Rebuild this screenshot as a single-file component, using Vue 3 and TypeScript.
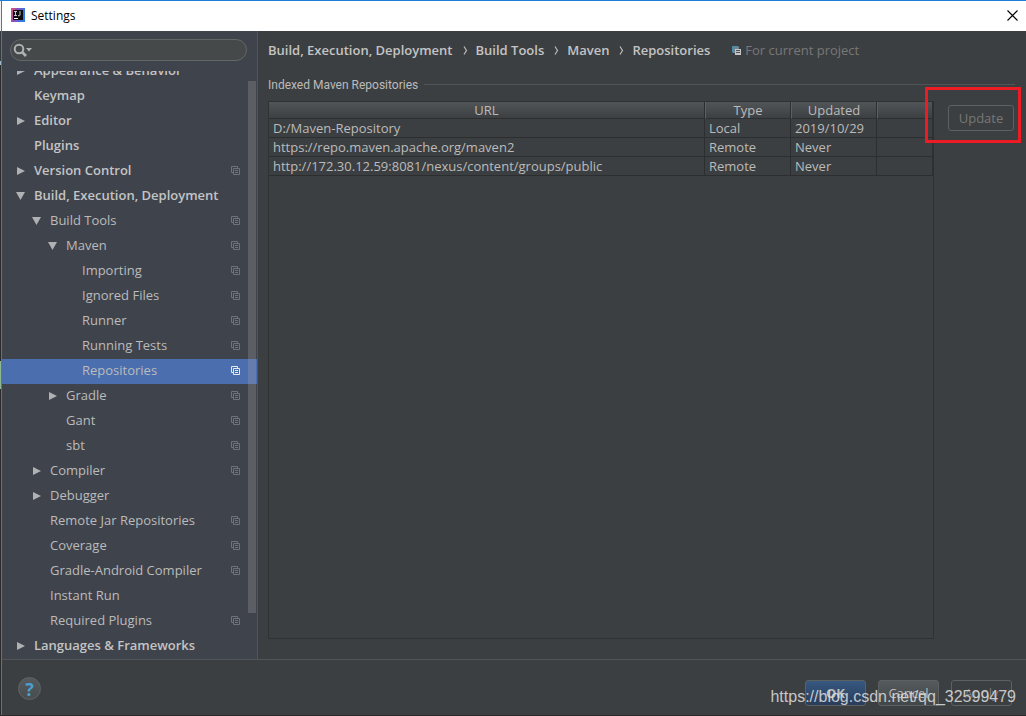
<script setup lang="ts">
import { ref } from 'vue'

interface TreeItem {
  label: string
  level: number
  arrow?: 'right' | 'down'
  project?: boolean
}

interface Repository {
  url: string
  type: string
  updated: string
}

const items: TreeItem[] = [
  { label: 'Appearance & Behavior', level: 0, arrow: 'right' },
  { label: 'Keymap', level: 0 },
  { label: 'Editor', level: 0, arrow: 'right' },
  { label: 'Plugins', level: 0 },
  { label: 'Version Control', level: 0, arrow: 'right', project: true },
  { label: 'Build, Execution, Deployment', level: 0, arrow: 'down' },
  { label: 'Build Tools', level: 1, arrow: 'down', project: true },
  { label: 'Maven', level: 2, arrow: 'down', project: true },
  { label: 'Importing', level: 3, project: true },
  { label: 'Ignored Files', level: 3, project: true },
  { label: 'Runner', level: 3, project: true },
  { label: 'Running Tests', level: 3, project: true },
  { label: 'Repositories', level: 3, project: true },
  { label: 'Gradle', level: 2, arrow: 'right', project: true },
  { label: 'Gant', level: 2, project: true },
  { label: 'sbt', level: 2, project: true },
  { label: 'Compiler', level: 1, arrow: 'right', project: true },
  { label: 'Debugger', level: 1, arrow: 'right' },
  { label: 'Remote Jar Repositories', level: 1, project: true },
  { label: 'Coverage', level: 1, project: true },
  { label: 'Gradle-Android Compiler', level: 1, project: true },
  { label: 'Instant Run', level: 1 },
  { label: 'Required Plugins', level: 1, project: true },
  { label: 'Languages & Frameworks', level: 0, arrow: 'right' },
]

const repositories: Repository[] = [
  { url: 'D:/Maven-Repository', type: 'Local', updated: '2019/10/29' },
  { url: 'https://repo.maven.apache.org/maven2', type: 'Remote', updated: 'Never' },
  { url: 'http://172.30.12.59:8081/nexus/content/groups/public', type: 'Remote', updated: 'Never' },
]

const crumbs: string[] = ['Build, Execution, Deployment', 'Build Tools', 'Maven', 'Repositories']
const selected = ref('Repositories')
const query = ref('')
</script>

<template>
  <div class="window">
    <header class="titlebar">
      <svg class="app-icon" width="14" height="14" viewBox="0 0 14 14" aria-hidden="true">
        <defs>
          <linearGradient id="logo" x1="0" y1="0" x2="1" y2="0.3">
            <stop offset="0" stop-color="#f0506e" />
            <stop offset="0.45" stop-color="#8a4fc0" />
            <stop offset="1" stop-color="#2b7be8" />
          </linearGradient>
        </defs>
        <rect width="14" height="14" fill="url(#logo)" />
        <rect x="2" y="2" width="10" height="10" fill="#0c0c10" />
        <path d="M3 3.500h3M4.500 3.500v4M3 7.500h3M9 3v4q0 .7-.8.7H7" fill="none" stroke="#c8c8c8" stroke-width="1" />
        <path d="M3 10.500h4" stroke="#fff" stroke-width="1" />
      </svg>
      <h1 class="title">Settings</h1>
      <button class="close" type="button" aria-label="Close">
        <svg width="11" height="11" viewBox="0 0 11 11" aria-hidden="true">
          <path d="M.5.5l10 10M10.500.5l-10 10" stroke="#000" stroke-width="1.100" />
        </svg>
      </button>
    </header>

    <div class="body">
      <aside class="sidebar">
        <label class="search">
          <svg width="20" height="15" viewBox="0 0 20 15" aria-hidden="true">
            <circle cx="6" cy="6" r="4.300" fill="none" stroke="#afb1b3" stroke-width="2" />
            <path d="M9 9l4 4" stroke="#afb1b3" stroke-width="2.600" />
            <path d="M13 5h6l-3 3.500z" fill="#afb1b3" />
          </svg>
          <input v-model="query" type="text" aria-label="Search settings" />
        </label>
        <nav class="tree-area" aria-label="Settings categories">
          <ul class="tree">
            <li v-for="item in items" :key="item.label">
              <button
                type="button"
                class="row"
                :class="['level-' + item.level, { selected: item.label === selected }]"
                @click="selected = item.label"
              >
                <svg class="arrow" width="10" height="10" viewBox="0 0 10 10" aria-hidden="true">
                  <path v-if="item.arrow === 'right'" d="M1 1l8 4-8 4z" fill="#afb1b3" />
                  <path v-if="item.arrow === 'down'" d="M0 1h9L4.500 9z" fill="#afb1b3" />
                </svg>
                <span class="label">{{ item.label }}</span>
                <svg v-if="item.project" class="copy" width="9" height="9" viewBox="0 0 9 9" aria-hidden="true">
                  <path d="M2 6.500H.5v-6h6V2M2.500 2.500h6v6h-6zM4 4.500h3M4 6.500h3" fill="none" stroke="currentColor" />
                </svg>
              </button>
            </li>
          </ul>
          <div class="scroll-thumb"></div>
        </nav>
      </aside>

      <main class="content">
        <div class="crumbs">
          <template v-for="(crumb, i) in crumbs" :key="crumb">
            <svg v-if="i > 0" class="chevron" width="5" height="9" viewBox="0 0 5 9" aria-hidden="true">
              <path d="M1 .5l2.500 4L1 8.500" fill="none" stroke="#bbb" stroke-width="1.200" />
            </svg>
            <span class="crumb">{{ crumb }}</span>
          </template>
          <span class="scope">
            <svg width="9" height="9" viewBox="0 0 9 9" aria-hidden="true">
              <path d="M.5 6.500v-6h6" fill="none" stroke="#4a8fb0" />
              <path d="M1 1h6v6H1z" fill="#6d8591" />
              <path d="M3 3h6v6H3z" fill="#c3c5c6" />
              <path d="M4 4.500h4M4 6.500h4" stroke="#4c5052" />
            </svg>
            For current project
          </span>
        </div>

        <section class="group">
          <h2 class="group-title">Indexed Maven Repositories</h2>
          <div class="group-body">
            <div class="table-pane">
              <table>
                <colgroup>
                  <col />
                  <col class="col-mid" />
                  <col class="col-mid" />
                  <col class="col-last" />
                </colgroup>
                <thead>
                  <tr>
                    <th scope="col">URL</th>
                    <th scope="col">Type</th>
                    <th scope="col">Updated</th>
                    <th scope="col"></th>
                  </tr>
                </thead>
                <tbody>
                  <tr v-for="repo in repositories" :key="repo.url">
                    <td>{{ repo.url }}</td>
                    <td>{{ repo.type }}</td>
                    <td>{{ repo.updated }}</td>
                    <td></td>
                  </tr>
                </tbody>
              </table>
            </div>
            <div class="actions">
              <button class="btn disabled" type="button" disabled>Update</button>
              <div class="highlight"></div>
            </div>
          </div>
        </section>
      </main>
    </div>

    <footer class="footer">
      <button class="help" type="button" aria-label="Help">?</button>
      <div class="buttons">
        <button class="btn primary" type="button">OK</button>
        <button class="btn plain" type="button">Cancel</button>
        <button class="btn disabled" type="button" disabled>Apply</button>
      </div>
      <span class="watermark">https://blog.csdn.net/qq_32599479</span>
    </footer>
  </div>
</template>

<style>
body {
  margin: 0;
  background: #3c3f41;
}
</style>

<style scoped>
* {
  box-sizing: border-box;
}

.window {
  display: flex;
  flex-direction: column;
  height: 100vh;
  border-top: 1px solid #1c7fd4;
  border-bottom: 1px solid #2b2b2b;
  padding-left: 2px;
  background:
    linear-gradient(#2a81c4, #2a81c4) 1px 0 / 1px 100% no-repeat,
    linear-gradient(#f2f2f2 0 30px, #33383c 30px 60px, #9bb8cc 60px 64px, #2b2b2b 64px 360px, #8fb98f 360px 388px, #2b2b2b 388px) 0 0 / 1px 100% no-repeat,
    #3c3f41;
  color: #bbb;
  font-family: "Open Sans", "Noto Sans", sans-serif;
  font-size: 13px;
}

button {
  font: inherit;
  color: inherit;
  margin: 0;
}

.titlebar {
  display: flex;
  align-items: center;
  height: 30px;
  padding: 0 8px 2px 9px;
  background: #fff;
  color: #000;
}

.title {
  flex: 1;
  margin: 0 0 0 6px;
  font-size: 12px;
  font-weight: 400;
}

.close {
  display: flex;
  padding: 0;
  border: 0;
  background: none;
}

.body {
  flex: 1;
  display: flex;
  min-height: 0;
}

.sidebar {
  display: flex;
  flex-direction: column;
  width: 256px;
  border-right: 1px solid #515456;
  background: #3f434c;
}

.search {
  display: flex;
  flex: none;
  align-items: center;
  height: 22px;
  margin: 8px 10px 10px 8px;
  padding: 0 8px 0 2px;
  border: 1px solid #646767;
  border-radius: 11px;
  background: #45494a;
}

.search input {
  flex: 1;
  min-width: 0;
  padding: 0;
  border: 0;
  outline: 0;
  background: none;
  color: #bbb;
  font: inherit;
}

.tree-area {
  position: relative;
  flex: 1;
  display: flex;
  flex-direction: column;
  justify-content: flex-end;
  min-height: 0;
  overflow: hidden;
}

.tree {
  margin: 0;
  padding: 0;
  list-style: none;
}

.row {
  display: flex;
  align-items: center;
  width: 100%;
  height: 25px;
  padding: 0 17px 2px 14px;
  border: 0;
  background: none;
  text-align: left;
}

.level-0 {
  color: #c4c4c4;
  font-weight: 600;
}

.level-1 {
  padding-left: 30px;
}

.level-2 {
  padding-left: 46px;
}

.level-3 {
  padding-left: 62px;
}

.row.selected {
  background: #4b6eaf;
}

.arrow {
  flex: none;
}

.label {
  flex: 1;
  margin-left: 8px;
  padding-bottom: 2px;
  white-space: nowrap;
}

.copy {
  color: #6f7377;
}

.selected .copy {
  color: #e4e8ee;
}

.scroll-thumb {
  position: absolute;
  top: 10px;
  bottom: 46px;
  right: 1px;
  width: 8px;
  background: rgba(166, 166, 166, 0.28);
}

.content {
  flex: 1;
  display: flex;
  flex-direction: column;
  min-width: 0;
  padding: 9px 11px 20px 10px;
}

.crumbs {
  display: flex;
  align-items: center;
  height: 20px;
  white-space: nowrap;
}

.crumb {
  color: #c4c4c4;
  font-weight: 600;
}

.chevron {
  margin: 0 8px 0 10px;
}

.scope {
  display: flex;
  align-items: center;
  gap: 4px;
  margin-left: 22px;
  color: #777;
}

.group {
  flex: 1;
  display: flex;
  flex-direction: column;
  margin-top: 15px;
}

.group-title {
  display: flex;
  align-items: center;
  gap: 6px;
  height: 20px;
  margin: 0;
  font-family: Roboto, "Noto Sans", sans-serif;
  font-size: 12px;
  font-weight: 400;
}

.group-title::after {
  content: "";
  flex: 1;
  height: 1px;
  margin-bottom: 2px;
  background: #515456;
}

.group-body {
  flex: 1;
  display: flex;
  gap: 14px;
  margin-top: 6px;
}

.table-pane {
  flex: 1;
  border: 1px solid #2f3133;
}

table {
  width: 100%;
  border-collapse: separate;
  border-spacing: 0;
  table-layout: fixed;
}

.col-mid {
  width: 86px;
}

.col-last {
  width: 56px;
}

th,
td {
  padding: 0 4px;
  border-right: 1px solid #2c2e30;
  border-bottom: 1px solid #2c2e30;
  line-height: 18px;
  white-space: nowrap;
}

th {
  height: 17px;
  padding: 0;
  background: linear-gradient(#515557, #3d4042);
  font-weight: 400;
  line-height: 16px;
}

td {
  height: 19px;
}

th + th {
  border-left: 1px solid #5c6062;
}

.actions {
  position: relative;
  padding: 4px 1px 0 0;
}

.btn {
  display: block;
  width: 61px;
  height: 26px;
  padding: 0;
  border: 1px solid #5e6162;
  border-radius: 3px;
  background: none;
}

.actions .btn {
  width: 66px;
}

.btn.disabled {
  color: #777;
}

.btn.primary {
  background: linear-gradient(#365880, #293c59);
  font-weight: 700;
}

.btn.plain {
  background: linear-gradient(#555a5c, #414648);
}

.highlight {
  position: absolute;
  top: -14px;
  left: -23px;
  right: -6px;
  height: 56px;
  border: 3px solid #ed1c24;
  pointer-events: none;
}

.footer {
  position: relative;
  display: flex;
  flex: none;
  align-items: center;
  justify-content: space-between;
  height: 56px;
  padding: 0 14px 0 16px;
  border-top: 1px solid #515456;
}

.help {
  width: 23px;
  height: 23px;
  margin-top: 2px;
  padding: 0;
  border: 1px solid #606466;
  border-radius: 50%;
  background: linear-gradient(#55595b, #484d4f);
  color: #4a9fcf;
  font-size: 18px;
  font-weight: 700;
  line-height: 20px;
}

.buttons {
  display: flex;
  gap: 12px;
  padding-top: 10px;
}

.watermark {
  position: absolute;
  right: 10px;
  bottom: 8px;
  color: rgba(225, 225, 225, 0.85);
  font-family: "Liberation Sans", Arial, sans-serif;
  font-size: 16px;
  line-height: 20px;
}
</style>
